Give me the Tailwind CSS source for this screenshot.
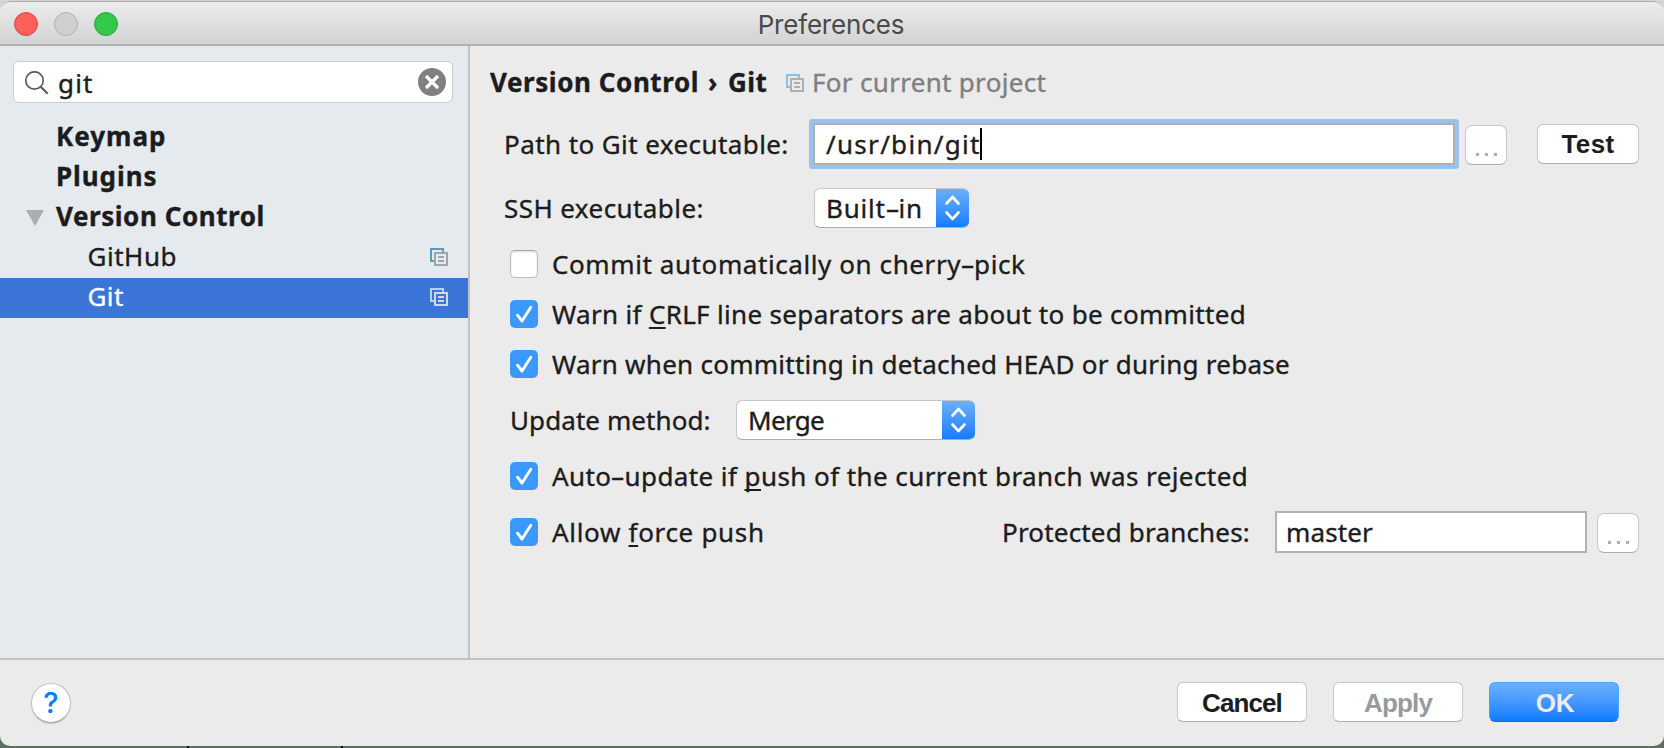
<!DOCTYPE html>
<html lang="en">
<head>
<meta charset="utf-8">
<title>Preferences</title>
<script src="https://cdn.jsdelivr.net/npm/@tailwindcss/browser@4"></script>
</head>
<body class="h-[748px] w-[1664px] overflow-hidden bg-linear-to-b from-[#d4d4d4] from-50% to-[#5d6e62] to-50% pt-px font-['Noto_Sans',sans-serif] text-[26px] leading-[36px] text-[#1c1c1c] whitespace-nowrap">
<svg class="hidden">
  <symbol id="check" viewBox="0 0 28 28"><path d="M7.500 15.200 12 21 20.800 7.200" fill="none" stroke="#fff" stroke-width="2.900" stroke-linecap="round" stroke-linejoin="round"/></symbol>
  <symbol id="updown" viewBox="0 0 31 40"><path d="M9.500 15.500 15.500 9l6 6.500M9.500 24.500l6 6.500 6-6.500" fill="none" stroke="#fff" stroke-width="2.600" stroke-linecap="round" stroke-linejoin="round"/></symbol>
  <symbol id="dots" viewBox="0 0 40 40"><path d="M10 27h3v3h-3zM19 27h3v3h-3zM28 27h3v3h-3z" fill="#adadad"/></symbol>
</svg>
<div class="flex h-[745px] flex-col overflow-hidden rounded-[10px] bg-[#ebebeb]">
  <header class="relative flex h-[45px] shrink-0 items-center justify-center rounded-t-[10px] border-t border-b-2 border-t-[#a9a9a9] border-b-[#b1b1b1] bg-linear-to-b from-[#ececec] to-[#d3d3d3]">
    <div class="absolute left-[14px] top-[10px] flex gap-4">
      <span class="size-6 rounded-full border border-[#e2463f] bg-[#fc605b]"></span>
      <span class="size-6 rounded-full border border-[#b0b0b0] bg-[#d0d0d0]"></span>
      <span class="size-6 rounded-full border border-[#22aa35] bg-[#34c84a]"></span>
    </div>
    <h1 class="pt-[3px] pr-[2px] font-['Inter',sans-serif] tracking-[-0.2px] text-[#4a4a4a]">Preferences</h1>
  </header>

  <div class="flex h-[612px] shrink-0 [-webkit-text-stroke:0.35px]">
    <aside class="w-[470px] shrink-0 border-r-2 border-[#c2c2c2] bg-[#e5eaee] pt-[15px]">
      <div class="mx-[13px] flex h-[42px] w-[440px] items-center rounded-[6px] border border-[#c9cdd1] bg-white">
        <svg class="mt-[2px] ml-[11px] size-6 shrink-0" viewBox="0 0 24 24" fill="none" stroke="#5c5c5c" stroke-width="1.700"><circle cx="9.500" cy="9.500" r="8.700"/><path d="M15.700 15.700l7 7" stroke-width="2.200"/></svg>
        <span class="ml-[9px] grow pt-[2px] tracking-[1.15px]">git</span>
        <svg class="mr-[6px] size-7" viewBox="0 0 28 28"><circle cx="14" cy="14" r="14" fill="#808080"/><path d="M8 8l12 12M20 8l-12 12" stroke="#fff" stroke-width="3.200"/></svg>
      </div>
      <ul class="mt-[15px]">
        <li class="h-10 pl-[56px] font-bold tracking-[0.99px]">Keymap</li>
        <li class="h-10 pl-[56px] font-bold tracking-[0.93px]">Plugins</li>
        <li class="flex h-10 pl-[26px] font-bold tracking-[0.55px]"><svg class="mt-[12px] mr-[12px] h-4 w-[18px]" viewBox="0 0 18 16"><path d="M0 0h18L9 16z" fill="#adadad"/></svg>Version Control</li>
        <li class="flex h-10 justify-between pr-[20px] pl-[87.5px] tracking-[0.53px]">GitHub
          <svg class="mt-[10px] size-[18px]" viewBox="0 0 18 18" fill="none" stroke-width="2"><path d="M4 13H1V1h12v3" stroke="#5a9cc0"/><path d="M5 5h12v12H5zM8 9h6M8 13h6" stroke="#a2a4a6"/></svg></li>
        <li class="flex h-10 justify-between bg-[#3a75d7] pr-[20px] pl-[87.5px] tracking-[0.4px] text-white">Git
          <svg class="mt-[10px] size-[18px]" viewBox="0 0 18 18" fill="none" stroke-width="2"><path d="M4 13H1V1h12v3" stroke="#b5d4ea"/><path d="M5 5h12v12H5zM8 9h6M8 13h6" stroke="#d5d8dc"/></svg></li>
      </ul>
    </aside>

    <main class="grow pt-[18px]">
      <div class="flex pl-[20px]">
        <span class="w-[218px] font-bold tracking-[0.57px]">Version Control</span>
        <span class="w-[20px] font-bold">›</span>
        <span class="w-[58px] font-bold tracking-[0.45px]">Git</span>
        <svg class="mt-[10px] size-[18px]" viewBox="0 0 18 18" fill="none" stroke-width="2"><path d="M4 13H1V1h12v3" stroke="#8cc0dd"/><path d="M5 5h12v12H5zM8 9h6M8 13h6" stroke="#b0b0b0"/></svg>
        <span class="ml-[8px] tracking-[0.31px] text-[#808080]">For current project</span>
      </div>

      <div class="mt-[23px] flex h-[42px] items-center pl-[34px]">
        <label class="w-[309px] tracking-[0.42px]">Path to Git executable:</label>
        <div class="flex h-[42px] w-[642px] items-center border-2 border-[#b0b0b0] bg-white pl-[11px] shadow-[0_0_0_4px_#97c3f3] outline-[4.5px] outline-[#97c3f3] rounded-[1px]"><span class="tracking-[1.3px]">/usr/bin/git</span><span class="-ml-px h-8 w-[2px] bg-black"></span></div>
        <button class="mt-px ml-[10px] h-10 w-[42px] rounded-[7px] border border-[#c6c6c6] border-b-[#adadad] bg-white"><svg class="size-10"><use href="#dots"/></svg></button>
        <button class="mb-px ml-[30px] h-10 w-[102px] rounded-[6px] border border-[#c6c6c6] border-b-[#adadad] bg-white pt-px font-['Liberation_Sans',sans-serif] font-bold tracking-[0.38px] [-webkit-text-stroke:0]">Test</button>
      </div>

      <div class="mt-[23px] flex h-10 items-center pl-[34px]">
        <label class="w-[310px] tracking-[0.43px]">SSH executable:</label>
        <div class="flex h-10 w-[155px] justify-between overflow-hidden rounded-[6px] border border-r-0 border-[#c6c6c6] border-b-[#adadad] bg-white pl-[11px]"><span class="pt-px tracking-[0.75px]">Built<span class="inline-block w-[13px] scale-x-[1.7] text-center tracking-normal">-</span>in</span><svg class="-my-px h-10 w-[33px] shrink-0 bg-linear-to-b from-[#6bb1fa] to-[#0a7bff]"><use href="#updown" width="33" height="40"/></svg></div>
      </div>

      <div class="mt-[22px] flex h-7 items-center gap-[14px] pl-[40px]">
        <span class="size-7 rounded-[5px] border border-[#bdbdbd] border-t-[#a8a8a8] bg-white shadow-[inset_0_1px_2px_#dddddd]"></span>
        <span class="tracking-[0.59px]">Commit automatically on cherry<span class="inline-block w-[13px] scale-x-[1.7] text-center tracking-normal">-</span>pick</span>
      </div>
      <div class="mt-[22px] flex h-7 items-center gap-[14px] pl-[40px]">
        <svg class="size-7 rounded-[5px] bg-[#3b99fc]"><use href="#check"/></svg>
        <span class="tracking-[0.33px]">Warn if <u class="underline decoration-2 underline-offset-[3px] [text-decoration-skip-ink:none]">C</u>RLF line separators are about to be committed</span>
      </div>
      <div class="mt-[22px] flex h-7 items-center gap-[14px] pl-[40px]">
        <svg class="size-7 rounded-[5px] bg-[#3b99fc]"><use href="#check"/></svg>
        <span class="tracking-[0.26px]">Warn when committing in detached HEAD or during rebase</span>
      </div>

      <div class="mt-[22px] flex h-10 items-center pl-[40px]">
        <label class="w-[226px] tracking-[0.08px]">Update method:</label>
        <div class="flex h-10 w-[239px] justify-between overflow-hidden rounded-[6px] border border-r-0 border-[#c6c6c6] border-b-[#adadad] bg-white pl-[11px]"><span class="pt-px tracking-[-0.68px]">Merge</span><svg class="-my-px h-10 w-[33px] shrink-0 bg-linear-to-b from-[#6bb1fa] to-[#0a7bff]"><use href="#updown" width="33" height="40"/></svg></div>
      </div>

      <div class="mt-[22px] flex h-7 items-center gap-[14px] pl-[40px]">
        <svg class="size-7 rounded-[5px] bg-[#3b99fc]"><use href="#check"/></svg>
        <span class="tracking-[0.42px]">Auto<span class="inline-block w-[13px] scale-x-[1.7] text-center tracking-normal">-</span>update if <u class="underline decoration-2 underline-offset-[3px] [text-decoration-skip-ink:none]">p</u>ush of the current branch was rejected</span>
      </div>

      <div class="mt-[21px] flex h-[42px] items-center pl-[40px]">
        <svg class="size-7 rounded-[5px] bg-[#3b99fc]"><use href="#check"/></svg>
        <span class="ml-[14px] w-[450px] tracking-[0.68px]">Allow <u class="underline decoration-2 underline-offset-[3px] [text-decoration-skip-ink:none]">f</u>orce push</span>
        <label class="w-[273px] tracking-[0.18px]">Protected branches:</label>
        <div class="flex h-[42px] w-[312px] items-center border-2 border-[#b3b3b3] bg-white pl-[9px] tracking-[0.12px]">master</div>
        <button class="mt-[2px] ml-[10px] h-10 w-[42px] rounded-[7px] border border-[#c6c6c6] border-b-[#adadad] bg-white"><svg class="size-10"><use href="#dots"/></svg></button>
      </div>
    </main>
  </div>

  <footer class="flex h-[88px] shrink-0 items-start gap-[26px] border-t-2 border-[#c2c2c2] pt-[22px] pr-[45px] font-['Liberation_Sans',sans-serif] font-bold">
    <button class="mt-px mr-auto ml-[31px] flex size-10 items-center justify-center rounded-full border border-[#c4c4c4] border-b-[#a8a8a8] bg-white font-['Inter',sans-serif] text-[29px] font-medium text-[#0a7bff] shadow-[0_1px_1px_#c8c8c8]">?</button>
    <button class="h-10 w-[130px] rounded-[6px] border border-[#c6c6c6] border-b-[#adadad] bg-white pt-px tracking-[-0.91px]">Cancel</button>
    <button class="h-10 w-[130px] rounded-[6px] border border-[#c6c6c6] border-b-[#adadad] bg-white pt-px tracking-[-0.82px] text-[#9a9a9a]">Apply</button>
    <button class="h-10 w-[130px] rounded-[6px] border border-[#4ba0f8] border-b-[#0a6cf0] bg-linear-to-b from-[#6bb1fa] to-[#0a7bff] pt-px pl-[2px] tracking-[-0.22px] text-[#ececf2]">OK</button>
  </footer>
</div>
<div class="flex h-[2px]"><i class="ml-[187px] w-[2px] bg-black"></i><i class="ml-[152px] w-[2px] bg-black"></i></div>
</body>
</html>
